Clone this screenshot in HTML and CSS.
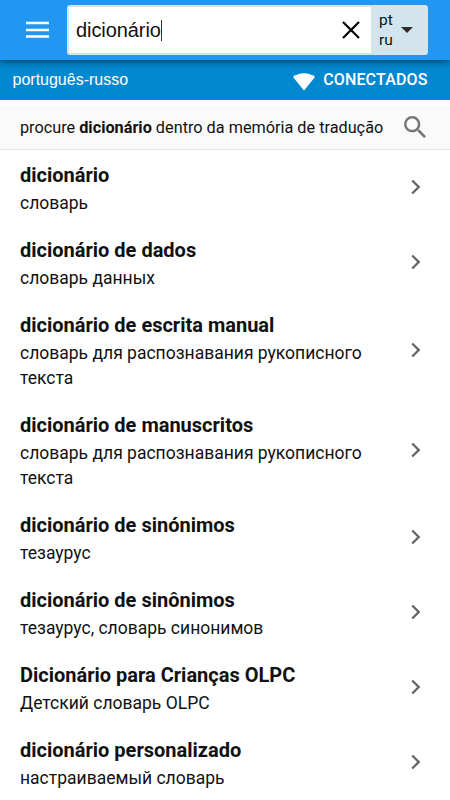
FILE: index.html
```html
<!DOCTYPE html>
<html lang="pt">
<head>
<meta charset="utf-8">
<title>dicionário</title>
<link rel="stylesheet" href="styles.css">
</head>
<body>
<header class="topbar">
  <svg class="menu" viewBox="0 0 24 18"><path d="M0 2h23M0 9h23M0 15.500h23" stroke="#fff" stroke-width="2.600"/></svg>
  <div class="search">
    <div class="field"><span class="query">dicionário</span><span class="caret"></span>
      <svg class="clear" viewBox="0 0 18 18"><path d="M1 1l16 16M17 1L1 17" stroke="#000" stroke-width="2.2"/></svg>
    </div>
    <div class="langs"><div class="codes"><span>pt</span><span>ru</span></div>
      <svg class="arrow" viewBox="0 0 12 6"><path d="M0 0h12L6 6z" fill="#33292a"/></svg>
    </div>
  </div>
</header>
<div class="status">
  <span class="pair">português-russo</span>
  <svg class="wifi" viewBox="0 0 22 18"><path d="M0 4C6-.9 16-.9 22 4L11 17.500z" fill="#fff"/></svg>
  <span class="online">CONECTADOS</span>
</div>
<div class="memory">
  <span>procure <b>dicionário</b> dentro da memória de tradução</span>
  <svg class="lens" viewBox="3 3 17.490 17.490"><path fill="#757575" d="M15.500 14h-.79l-.28-.27A6.471 6.471 0 0 0 16 9.500 6.500 6.500 0 1 0 9.500 16c1.610 0 3.090-.59 4.230-1.570l.27.28v.79l5 4.990L20.490 19l-4.990-5zm-6 0C7.010 14 5 11.990 5 9.500S7.010 5 9.500 5 14 7.010 14 9.500 11.990 14 9.500 14z"/></svg>
</div>
<main>
  <div class="item"><div class="text"><h2>dicionário</h2><p>словарь</p></div><svg class="chev" viewBox="0 0 10 16"><path d="M1.200 1.500L7.700 8l-6.500 6.500"/></svg></div>
  <div class="item"><div class="text"><h2>dicionário de dados</h2><p>словарь данных</p></div><svg class="chev" viewBox="0 0 10 16"><path d="M1.200 1.500L7.700 8l-6.500 6.500"/></svg></div>
  <div class="item"><div class="text"><h2>dicionário de escrita manual</h2><p>словарь для распознавания рукописного текста</p></div><svg class="chev" viewBox="0 0 10 16"><path d="M1.200 1.500L7.700 8l-6.500 6.500"/></svg></div>
  <div class="item"><div class="text"><h2>dicionário de manuscritos</h2><p>словарь для распознавания рукописного текста</p></div><svg class="chev" viewBox="0 0 10 16"><path d="M1.200 1.500L7.700 8l-6.500 6.500"/></svg></div>
  <div class="item"><div class="text"><h2>dicionário de sinónimos</h2><p>тезаурус</p></div><svg class="chev" viewBox="0 0 10 16"><path d="M1.200 1.500L7.700 8l-6.500 6.500"/></svg></div>
  <div class="item"><div class="text"><h2>dicionário de sinônimos</h2><p>тезаурус, словарь синонимов</p></div><svg class="chev" viewBox="0 0 10 16"><path d="M1.200 1.500L7.700 8l-6.500 6.500"/></svg></div>
  <div class="item"><div class="text"><h2>Dicionário para Crianças OLPC</h2><p>Детский словарь OLPC</p></div><svg class="chev" viewBox="0 0 10 16"><path d="M1.200 1.500L7.700 8l-6.500 6.500"/></svg></div>
  <div class="item"><div class="text"><h2>dicionário personalizado</h2><p>настраиваемый словарь</p></div><svg class="chev" viewBox="0 0 10 16"><path d="M1.200 1.500L7.700 8l-6.500 6.500"/></svg></div>
</main>
</body>
</html>
```
FILE: styles.css
```css
* { box-sizing: border-box; }
body { margin: 0; height: 800px; overflow: hidden; background: #fff; color: #111; font-family: Roboto, sans-serif; }
svg { display: block; flex: none; }
.topbar { position: relative; z-index: 1; display: flex; align-items: center; height: 60px; padding: 0 22px 0 26px; background: #2196f3; box-shadow: 0 2px 7px rgba(0,0,0,.5); }
.menu { width: 24px; height: 18px; margin-right: 17px; }
.search { display: flex; width: 361px; height: 50px; padding: 2px 0 2px 2px; border-radius: 3px; background: #d2e5ec; }
.field { display: flex; align-items: center; width: 302px; height: 46px; padding: 0 11px 0 7px; background: #fff; }
.query { font: 20px/46px "Liberation Sans", Arial, sans-serif; letter-spacing: -.08px; }
.caret { width: 1px; height: 21px; background: #333; }
.clear { width: 18px; height: 18px; margin-left: auto; }
.langs { display: flex; align-items: center; flex: 1; padding: 0 15px 0 8px; justify-content: space-between; }
.codes { display: flex; flex-direction: column; font-size: 15.500px; line-height: 20px; }
.arrow { width: 12px; height: 6px; }
.status { display: flex; align-items: center; height: 40px; padding: 0 22.500px 0 12.500px; background: #0288d1; color: #fff; }
.pair { font: 16px/20px "Liberation Sans", Arial, sans-serif; }
.wifi { width: 22px; height: 18px; margin: 3px 8.500px 0 auto; }
.online { margin-top: -2px; font-size: 16px; font-weight: 500; letter-spacing: .15px; }
.memory { display: flex; align-items: center; justify-content: space-between; height: 45px; margin-top: 5px; padding: 0 24.500px 0 20px; border-bottom: 1px solid #e4e4e4; background: #fafafa; font-size: 16.250px; white-space: nowrap; }
.lens { width: 22px; height: 22px; }
.item { display: flex; align-items: center; justify-content: space-between; padding: 0 29.500px 0 20px; }
.text { width: 360px; padding: 13px 0 9px; }
h2 { margin: 0 0 3px; font-size: 20px; line-height: 25px; font-weight: 700; white-space: nowrap; }
p { margin: 0; font-size: 17.500px; line-height: 25px; }
.chev { width: 10px; height: 16px; margin-bottom: 1px; fill: none; stroke: #666; stroke-width: 2.400; }
```
